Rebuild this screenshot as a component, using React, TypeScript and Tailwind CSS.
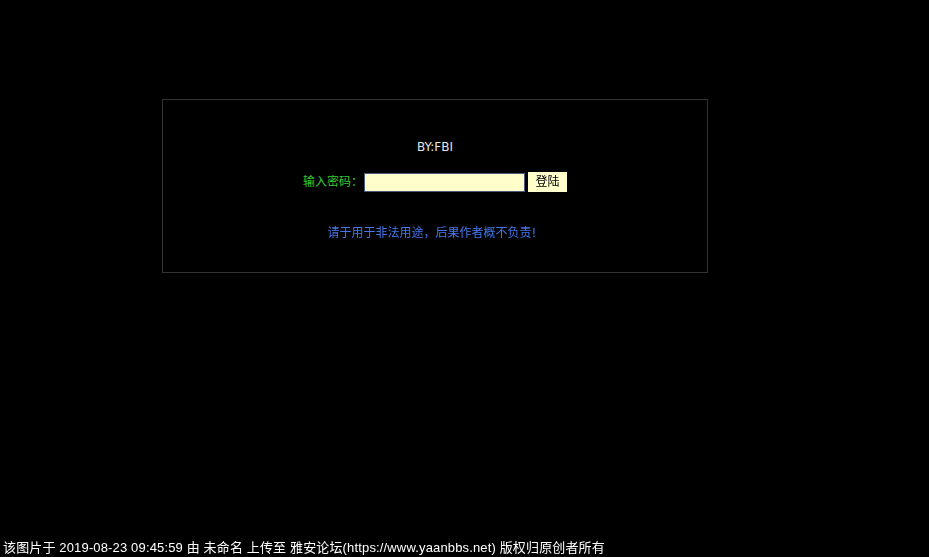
import React from "react";

export default function App() {
  const font = { fontFamily: '"DejaVu Sans", "Noto Sans CJK SC", sans-serif' };
  return (
    <div className="flex h-[557px] w-full flex-col bg-black" style={font}>
      <div className="flex-1 pt-[99px]">
        <div className="ml-[162px] flex h-[174px] w-[546px] flex-col items-center border border-[#333333] pt-[39px] text-[12px]">
          <div className="leading-[16px] text-[#e6e6e6]">BY:FBI</div>
          <div className="mt-[17px] flex items-center">
            <span className="text-[#33cc33]">输入密码：</span>
            <input
              autoFocus
              className="ml-[1px] h-[19px] w-[161px] border border-[#4a5a7a] bg-[#ffffcc] px-1 text-[12px] text-black outline-none"
            />
            <button className="ml-[3px] h-[20px] w-[39px] bg-[#ffffcc] text-[12px] text-black">登陆</button>
          </div>
          <div className="mt-[33px] pr-[6px] leading-[16px] text-[#4477ee]">请于用于非法用途，后果作者概不负责!</div>
        </div>
      </div>
      <div
        className="pl-[3px] text-[13px] leading-[18px] tracking-[0.15px] text-white"
        style={{ fontFamily: '"Liberation Sans", "Noto Sans CJK SC", sans-serif' }}
      >
        该图片于 2019-08-23 09:45:59 由 未命名 上传至 雅安论坛(https://www.yaanbbs.net) 版权归原创者所有
      </div>
    </div>
  );
}
